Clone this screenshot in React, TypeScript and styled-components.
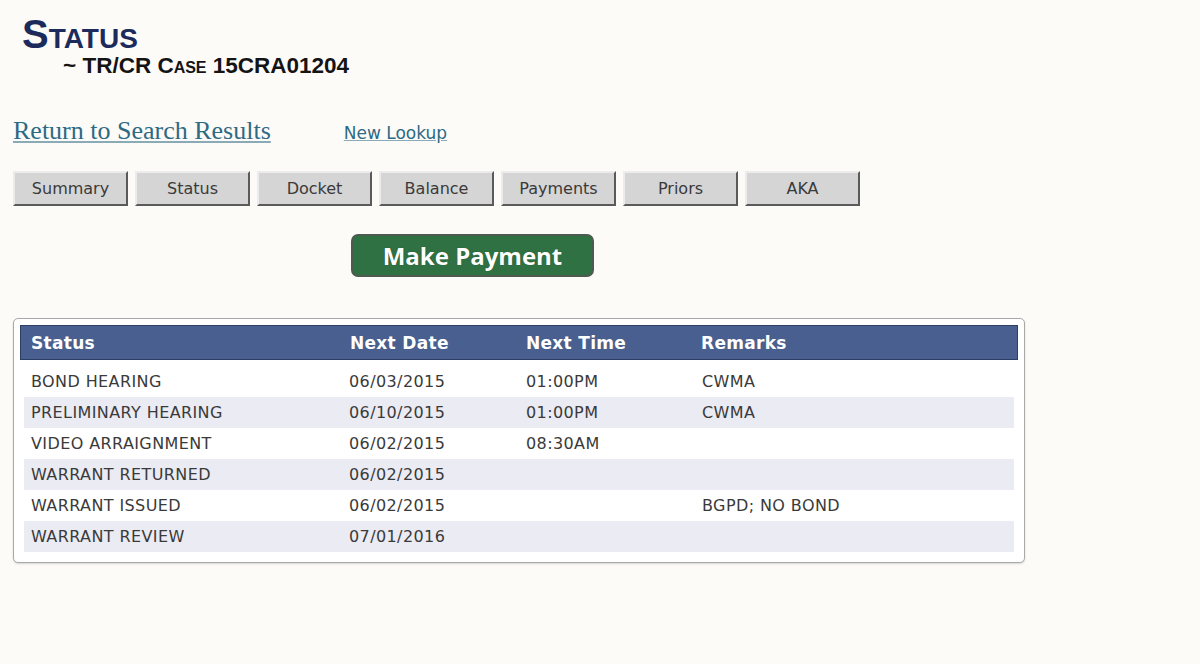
import React from "react";
import styled, { createGlobalStyle } from "styled-components";

const GlobalStyle = createGlobalStyle`
  body {
    margin: 0;
    background: #fdfbf8;
    font-family: "DejaVu Sans", Verdana, sans-serif;
  }
`;

const Page = styled.div`
  padding: 14px 13px 40px;
`;

const Title = styled.h1`
  margin: 0 0 0 9px;
  font-family: "Liberation Sans", Arial, sans-serif;
  font-size: 40px;
  font-weight: bold;
  font-variant: small-caps;
  line-height: 40px;
  color: #1c2b5c;
`;

const SubTitle = styled.h2`
  margin: 0 0 0 50px;
  font-family: "Liberation Sans", Arial, sans-serif;
  font-size: 22.5px;
  font-weight: bold;
  font-variant: small-caps;
  line-height: 24px;
  color: #141414;
`;

const LinkRow = styled.div`
  display: flex;
  align-items: baseline;
  gap: 73px;
  margin-top: 38px;
  line-height: 30px;
`;

const BackLink = styled.a`
  font-family: "Liberation Serif", "Times New Roman", serif;
  font-size: 26px;
  color: #2d6a84;
  text-decoration: underline;
  text-decoration-color: #8aaab8;
`;

const SmallLink = styled.a`
  font-family: "DejaVu Sans", Verdana, sans-serif;
  font-size: 17px;
  color: #2d6a84;
  text-decoration: underline;
  text-decoration-color: #8aaab8;
`;

const Tabs = styled.div`
  display: flex;
  gap: 7px;
  margin-top: 23px;
`;

const Tab = styled.button`
  width: 115px;
  height: 35px;
  padding: 0;
  background: #d5d5d5;
  border: 2px solid;
  border-color: #ececec #5a5a5a #5a5a5a #ececec;
  font-family: "DejaVu Sans", Verdana, sans-serif;
  font-size: 16px;
  color: #3a3a3a;
  cursor: pointer;
`;

const PayButton = styled.button`
  display: block;
  margin: 28px 0 0 338px;
  width: 243px;
  height: 43px;
  padding: 0;
  background: #2f7142;
  border: 2px solid #4d5a50;
  border-radius: 7px;
  font-family: "Open Sans", "DejaVu Sans", sans-serif;
  font-size: 24px;
  font-weight: bold;
  color: #ffffff;
  text-shadow: 0 0 1px rgba(0, 0, 0, 0.4);
  cursor: pointer;
`;

const Panel = styled.div`
  margin-top: 41px;
  width: 1012px;
  box-sizing: border-box;
  padding: 6px 6px 10px;
  background: #ffffff;
  border: 1px solid #a9a9a9;
  border-radius: 5px;
  box-shadow: 0 1px 2px rgba(0, 0, 0, 0.15);
`;

const HeadRow = styled.div`
  display: grid;
  grid-template-columns: 319px 176px 175px 1fr;
  align-items: center;
  height: 35px;
  padding-left: 10px;
  box-sizing: border-box;
  background: #485f8f;
  border: 1px solid #2c3e66;
  font-size: 17px;
  font-weight: bold;
  letter-spacing: 0.3px;
  color: #ffffff;
`;

const Rows = styled.div`
  margin: 6px 4px 0;
`;

const Row = styled.div<{ $alt: boolean }>`
  display: grid;
  grid-template-columns: 318px 177px 176px 1fr;
  align-items: center;
  height: 31px;
  padding-left: 7px;
  background: ${(p) => (p.$alt ? "#ebebf3" : "#ffffff")};
  font-size: 16px;
  letter-spacing: 0.4px;
  color: #3a3a3a;
`;

const rows = [
  { status: "BOND HEARING", date: "06/03/2015", time: "01:00PM", remarks: "CWMA" },
  { status: "PRELIMINARY HEARING", date: "06/10/2015", time: "01:00PM", remarks: "CWMA" },
  { status: "VIDEO ARRAIGNMENT", date: "06/02/2015", time: "08:30AM", remarks: "" },
  { status: "WARRANT RETURNED", date: "06/02/2015", time: "", remarks: "" },
  { status: "WARRANT ISSUED", date: "06/02/2015", time: "", remarks: "BGPD; NO BOND" },
  { status: "WARRANT REVIEW", date: "07/01/2016", time: "", remarks: "" },
];

const tabs = ["Summary", "Status", "Docket", "Balance", "Payments", "Priors", "AKA"];

export default function App() {
  return (
    <>
      <GlobalStyle />
      <Page>
        <Title>Status</Title>
        <SubTitle>~ TR/CR Case 15CRA01204</SubTitle>
        <LinkRow>
          <BackLink href="#">Return to Search Results</BackLink>
          <SmallLink href="#">New Lookup</SmallLink>
        </LinkRow>
        <Tabs>
          {tabs.map((t) => (
            <Tab key={t}>{t}</Tab>
          ))}
        </Tabs>
        <PayButton>Make Payment</PayButton>
        <Panel>
          <HeadRow>
            <span>Status</span>
            <span>Next Date</span>
            <span>Next Time</span>
            <span>Remarks</span>
          </HeadRow>
          <Rows>
            {rows.map((r, i) => (
              <Row key={r.status} $alt={i % 2 === 1}>
                <span>{r.status}</span>
                <span>{r.date}</span>
                <span>{r.time}</span>
                <span>{r.remarks}</span>
              </Row>
            ))}
          </Rows>
        </Panel>
      </Page>
    </>
  );
}
